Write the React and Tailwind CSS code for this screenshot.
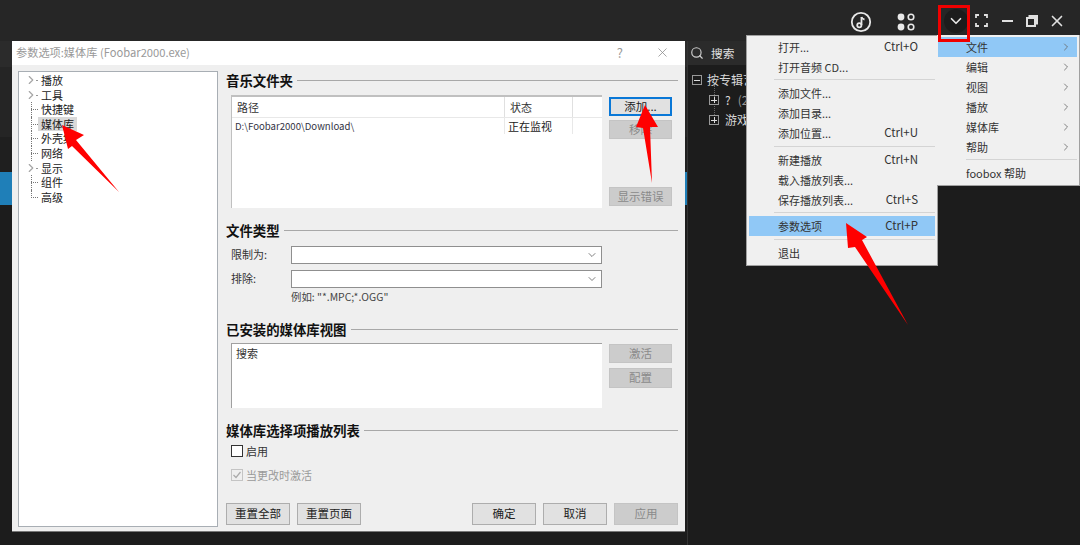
import { ChevronDown, ChevronRight, Search, X } from "lucide-react"

function Heading({ children }) {
  return (
    <div className="flex items-center gap-[4px] h-[18px]">
      <span className="font-bold text-[13.4px] leading-[18px] text-[#111]">{children}</span>
      <div className="flex-1 h-px bg-[#a8a8a8]"></div>
    </div>
  )
}

function Btn({ children, disabled, focus, className = "" }) {
  let cls = "border-[#adadad] bg-[#e1e1e1] text-[#222]"
  if (disabled) cls = "border-[#c4c4c4] bg-[#cccccc] text-[#8a8a8a]"
  if (focus) cls = "border-2 border-[#0a78d7] bg-[#e1e1e1] text-[#222]"
  return (
    <div className={`flex items-center justify-center border text-[11.5px] leading-none ${cls} ${className}`}>{children}</div>
  )
}

function TreeItem({ label, expand, selected, last }) {
  return (
    <div className="flex items-center h-[14.6px] pl-[5px]">
      <div className="w-[14px] h-full relative flex items-center justify-center">
        {expand ? (
          <>
            <ChevronRight size={14} strokeWidth={2} className="text-[#a6a6a6]" />
            <div className="absolute left-[12px] top-[7px] w-[2px] h-px bg-[#999]"></div>
          </>
        ) : (
          <>
            <div className={`absolute left-[7px] top-0 border-l border-dotted border-[#777] ${last ? "h-[8px]" : "h-full"}`}></div>
            <div className="absolute left-[7px] top-[7px] w-[7px] border-t border-dotted border-[#777]"></div>
          </>
        )}
      </div>
      <span className={`text-[11px] leading-[14.6px] px-[3px] text-[#222] ${selected ? "bg-[#d9d9d9]" : ""}`}>{label}</span>
    </div>
  )
}

function Select({ label }) {
  return (
    <div className="flex items-center h-[18px] pl-[5px]">
      <span className="w-[60px] text-[11px] leading-[16px] pb-[2px] text-[#333]">{label}</span>
      <div className="w-[311px] h-[18px] bg-white border border-[#8f8f8f] flex items-center justify-end pr-[3px]">
        <ChevronDown size={12} strokeWidth={1.5} className="text-[#555]" />
      </div>
    </div>
  )
}

function MenuRow({ label, keys, arrow }) {
  return (
    <div className="flex items-center justify-between h-[20px] text-[11px] text-[#333]">
      <span>{label}</span>
      {keys && <span className="text-[11.5px]">{keys}</span>}
      {arrow && <ChevronRight size={12} strokeWidth={1.6} className="text-[#666]" />}
    </div>
  )
}

function Sep({ wide }) {
  return <div className={`h-px bg-[#d4d4d4] ml-[25px] ${wide ? "mt-[3px] mb-[3px]" : "mt-[2px] mb-[3px]"}`}></div>
}

function PlusBox() {
  return (
    <div className="w-[10px] h-[10px] border border-[#999] relative flex items-center justify-center">
      <div className="w-[6px] h-px bg-[#ddd]"></div>
      <div className="absolute w-px h-[6px] bg-[#ddd]"></div>
    </div>
  )
}

export default function App() {
  return (
    <div className="relative w-[1080px] h-[545px] overflow-hidden bg-[#1c1c1c] flex flex-col font-['Noto_Sans_CJK_SC','Liberation_Sans',sans-serif]">
      {/* top bar */}
      <div className="h-[41px] bg-[#262626] flex items-center justify-end shrink-0">
        <svg width="24" height="24" viewBox="0 0 24 24" className="mr-[23px] mt-[2px]" fill="none" stroke="#e8e8e8" strokeWidth="1.8">
          <circle cx="12" cy="12" r="9.2" />
          <path d="M12.5 7v8" />
          <circle cx="10.3" cy="15.2" r="2.1" />
          <path d="M12.5 7c.4 1.6 1.6 2.3 3 2.5" />
        </svg>
        <svg width="20" height="20" viewBox="0 0 20 20" className="mr-[28px] mt-[2px]">
          <circle cx="5" cy="5" r="3.4" fill="#e8e8e8" />
          <circle cx="15" cy="5" r="2.8" fill="none" stroke="#e8e8e8" strokeWidth="1.6" />
          <circle cx="5" cy="15" r="3.4" fill="#e8e8e8" />
          <circle cx="15" cy="15" r="2.8" fill="none" stroke="#e8e8e8" strokeWidth="1.6" />
        </svg>
        <div className="w-[24px] h-[24px] rounded-full bg-[#1c1c1c] flex items-center justify-center mr-[7px]">
          <ChevronDown size={18} strokeWidth={2.2} className="text-[#e8e8e8]" />
        </div>
        <svg width="13" height="13" viewBox="0 0 13 13" className="mr-[14px]" fill="none" stroke="#e0e0e0" strokeWidth="1.8">
          <path d="M1 4V1h3M9 1h3v3M12 9v3H9M4 12H1V9" />
        </svg>
        <div className="w-[11px] h-[2px] bg-[#e0e0e0] mr-[13px]"></div>
        <svg width="12" height="12" viewBox="0 0 12 12" className="mr-[10px]" fill="none" stroke="#e0e0e0" strokeWidth="2">
          <path d="M3.5 3V1h7.5v7.5H9" />
          <rect x="1" y="3" width="8" height="8" />
        </svg>
        <X size={18} strokeWidth={2.2} className="text-[#e0e0e0] mr-[14px]" />
      </div>

      {/* main behind the dialog */}
      <div className="flex flex-1">
        <div className="w-[687px] flex flex-col shrink-0">
          <div className="h-[26px] bg-[#2b2b2b]"></div>
          <div className="h-[70px] bg-[#252525]"></div>
          <div className="h-[35px] bg-[#1f1f1f]"></div>
          <div className="h-[33px] bg-[#1f7fb8]"></div>
        </div>
        <div className="flex-1 border-l border-[#333]">
          <div className="h-[24px] bg-[#2b2b2b] flex items-center pl-[2px] gap-[7px]">
            <Search size={14} strokeWidth={2} className="text-[#cfcfcf]" />
            <span className="text-[11.7px] text-[#e0e0e0]">搜索</span>
          </div>
          <div className="pt-[5px] pl-[4px] text-[12px] text-[#d8d8d8] relative">
            <div className="absolute left-[26px] top-[20px] h-[30px] border-l border-dotted border-[#666]"></div>
            <div className="flex items-center gap-[5px] h-[20px]">
              <div className="w-[10px] h-[10px] border border-[#999] flex items-center justify-center"><div className="w-[6px] h-px bg-[#ddd]"></div></div>
              <span>按专辑艺术家</span>
            </div>
            <div className="flex items-center gap-[6px] h-[20px] pl-[17px] relative">
              <PlusBox />
              <span>?<span className="ml-[7px] text-[#999]">(2)</span></span>
            </div>
            <div className="flex items-center gap-[6px] h-[20px] pl-[17px] relative">
              <PlusBox />
              <span>游戏</span>
            </div>
          </div>
        </div>
      </div>

      {/* dialog */}
      <div className="absolute left-[12px] top-[41px] w-[673px] h-[491px] bg-[#efefef] flex flex-col border-b border-[#777]">
        <div className="h-[24px] bg-white flex items-center pl-[4px] pr-[15px] pb-[1px] shrink-0">
          <span className="text-[11.2px] text-[#999] flex-1">参数选项:媒体库 (Foobar2000.exe)</span>
          <span className="text-[13px] text-[#999] mr-[32px]">?</span>
          <X size={15} strokeWidth={1.2} className="text-[#888]" />
        </div>
        <div className="flex flex-1 pl-[6px] pt-[6px]">
          <div className="w-[200px] h-[456px] bg-white border border-[#a8aeb4] pt-[1px] shrink-0">
            <TreeItem label="播放" expand />
            <TreeItem label="工具" expand />
            <TreeItem label="快捷键" />
            <TreeItem label="媒体库" selected />
            <TreeItem label="外壳集" />
            <TreeItem label="网络" />
            <TreeItem label="显示" expand />
            <TreeItem label="组件" />
            <TreeItem label="高级" last />
          </div>
          <div className="w-[452px] ml-[8px] flex flex-col">
            <Heading>音乐文件夹</Heading>
            <div className="flex pl-[5px] mt-[6px] h-[113px]">
              <div className="w-[371px] bg-white border-l border-t-2 border-[#c0c0c0]">
                <div className="flex h-[21px] border-b border-[#e8e8e8] text-[11px] text-[#333] items-center">
                  <span className="w-[273px] pl-[5px] border-r border-[#e0e0e0] h-full flex items-center">路径</span>
                  <span className="w-[68px] pl-[5px] border-r border-[#e0e0e0] h-full flex items-center">状态</span>
                </div>
                <div className="flex h-[16px] text-[11px] items-center">
                  <span className="w-[273px] pl-[3px] border-r border-[#e8e8e8] h-full flex items-center text-[9.6px] text-[#334]">D:\Foobar2000\Download\</span>
                  <span className="w-[68px] pl-[3px] border-r border-[#e8e8e8] h-full flex items-center text-[#222]">正在监视</span>
                </div>
              </div>
              <div className="ml-[7px] w-[63px] flex flex-col">
                <Btn focus className="h-[19px] mt-[2px]">添加...</Btn>
                <Btn disabled className="h-[19px] mt-[4px]">移除</Btn>
                <Btn disabled className="h-[19px] mt-[48px]">显示错误</Btn>
              </div>
            </div>
            <div className="mt-[13px]"><Heading>文件类型</Heading></div>
            <div className="mt-[7px]"><Select label="限制为:" /></div>
            <div className="mt-[6px]"><Select label="排除:" /></div>
            <div className="pl-[65px] text-[10.4px] leading-[14px] mt-[2px] text-[#444]">例如: "*.MPC;*.OGG"</div>
            <div className="mt-[16px]"><Heading>已安装的媒体库视图</Heading></div>
            <div className="flex pl-[5px] mt-[5px] h-[65px]">
              <div className="w-[371px] bg-white border-t border-l border-[#a0a0a0] pl-[4px] pt-[1px] text-[11px] text-[#333]">搜索</div>
              <div className="ml-[7px] w-[63px] flex flex-col">
                <Btn disabled className="h-[19px] mt-[1px]">激活</Btn>
                <Btn disabled className="h-[20px] mt-[5px]">配置</Btn>
              </div>
            </div>
            <div className="mt-[13px]"><Heading>媒体库选择项播放列表</Heading></div>
            <div className="flex items-center pl-[5px] mt-[4px] h-[16px] text-[11px] text-[#333]">
              <div className="w-[12px] h-[12px] border border-[#333] bg-white mr-[3px]"></div>
              启用
            </div>
            <div className="flex items-center pl-[5px] mt-[8px] h-[16px] text-[11px] text-[#999]">
              <div className="w-[12px] h-[12px] border border-[#c4c4c4] mr-[3px] flex items-center justify-center">
                <svg width="10" height="10" viewBox="0 0 10 10" fill="none" stroke="#aaa" strokeWidth="1.2"><path d="M1.5 5l2.5 2.5 4.5-5.5" /></svg>
              </div>
              当更改时激活
            </div>
            <div className="flex mt-[20px] h-[22px]">
              <Btn className="w-[64px] mr-[7px]">重置全部</Btn>
              <Btn className="w-[64px]">重置页面</Btn>
              <div className="flex-1"></div>
              <Btn className="w-[64px] mr-[7px]">确定</Btn>
              <Btn className="w-[64px] mr-[7px]">取消</Btn>
              <Btn disabled className="w-[64px]">应用</Btn>
            </div>
          </div>
        </div>
      </div>

      {/* left menu */}
      <div className="absolute left-[746px] top-[35px] w-[192px] h-[231px] bg-[#f0f0f0] border border-[#a0a0a0] pt-[1px] px-[2px]">
        <div className="pl-[29px] pr-[17px]"><MenuRow label="打开..." keys="Ctrl+O" /><MenuRow label="打开音频 CD..." /></div>
        <Sep />
        <div className="pl-[29px] pr-[17px]"><MenuRow label="添加文件..." /><MenuRow label="添加目录..." /><MenuRow label="添加位置..." keys="Ctrl+U" /></div>
        <Sep wide />
        <div className="pl-[29px] pr-[17px]"><MenuRow label="新建播放" keys="Ctrl+N" /><MenuRow label="载入播放列表..." /><MenuRow label="保存播放列表..." keys="Ctrl+S" /></div>
        <Sep />
        <div className="pl-[29px] pr-[17px] bg-[#90c8f6]"><MenuRow label="参数选项" keys="Ctrl+P" /></div>
        <Sep wide />
        <div className="pl-[29px] pr-[17px]"><MenuRow label="退出" /></div>
      </div>

      {/* right menu */}
      <div className="absolute left-[937px] top-[35px] w-[143px] h-[151px] bg-[#f0f0f0] border-b border-r border-[#a0a0a0] pt-[2px] pl-[1px] pr-[2px]">
        <div className="bg-[#90c8f6] pl-[28px] pr-[5px]"><MenuRow label="文件" arrow /></div>
        <div className="pl-[28px] pr-[5px]">
          <MenuRow label="编辑" arrow />
          <MenuRow label="视图" arrow />
          <MenuRow label="播放" arrow />
          <MenuRow label="媒体库" arrow />
          <MenuRow label="帮助" arrow />
        </div>
        <div className="h-px bg-[#d4d4d4] mt-[2px] mb-[3px] ml-[28px]"></div>
        <div className="pl-[28px] pr-[5px]"><MenuRow label="foobox 帮助" /></div>
      </div>

      {/* red annotations */}
      <div className="absolute left-[938px] top-[5px] w-[32px] h-[37px] border-[3px] border-[#f00000]"></div>
      <svg className="absolute left-0 top-0 pointer-events-none" width="1080" height="545">
        <polygon points="62,125 84,135 76,140 119,192 72,146 68,149" fill="#ff0000" />
        <polygon points="645,105 658,127 650,127 652,183 643,128 636,127" fill="#ff0000" />
        <polygon points="846,223 867,237 862,240 908,325 855,247 848,248" fill="#ff0000" />
      </svg>
    </div>
  )
}
